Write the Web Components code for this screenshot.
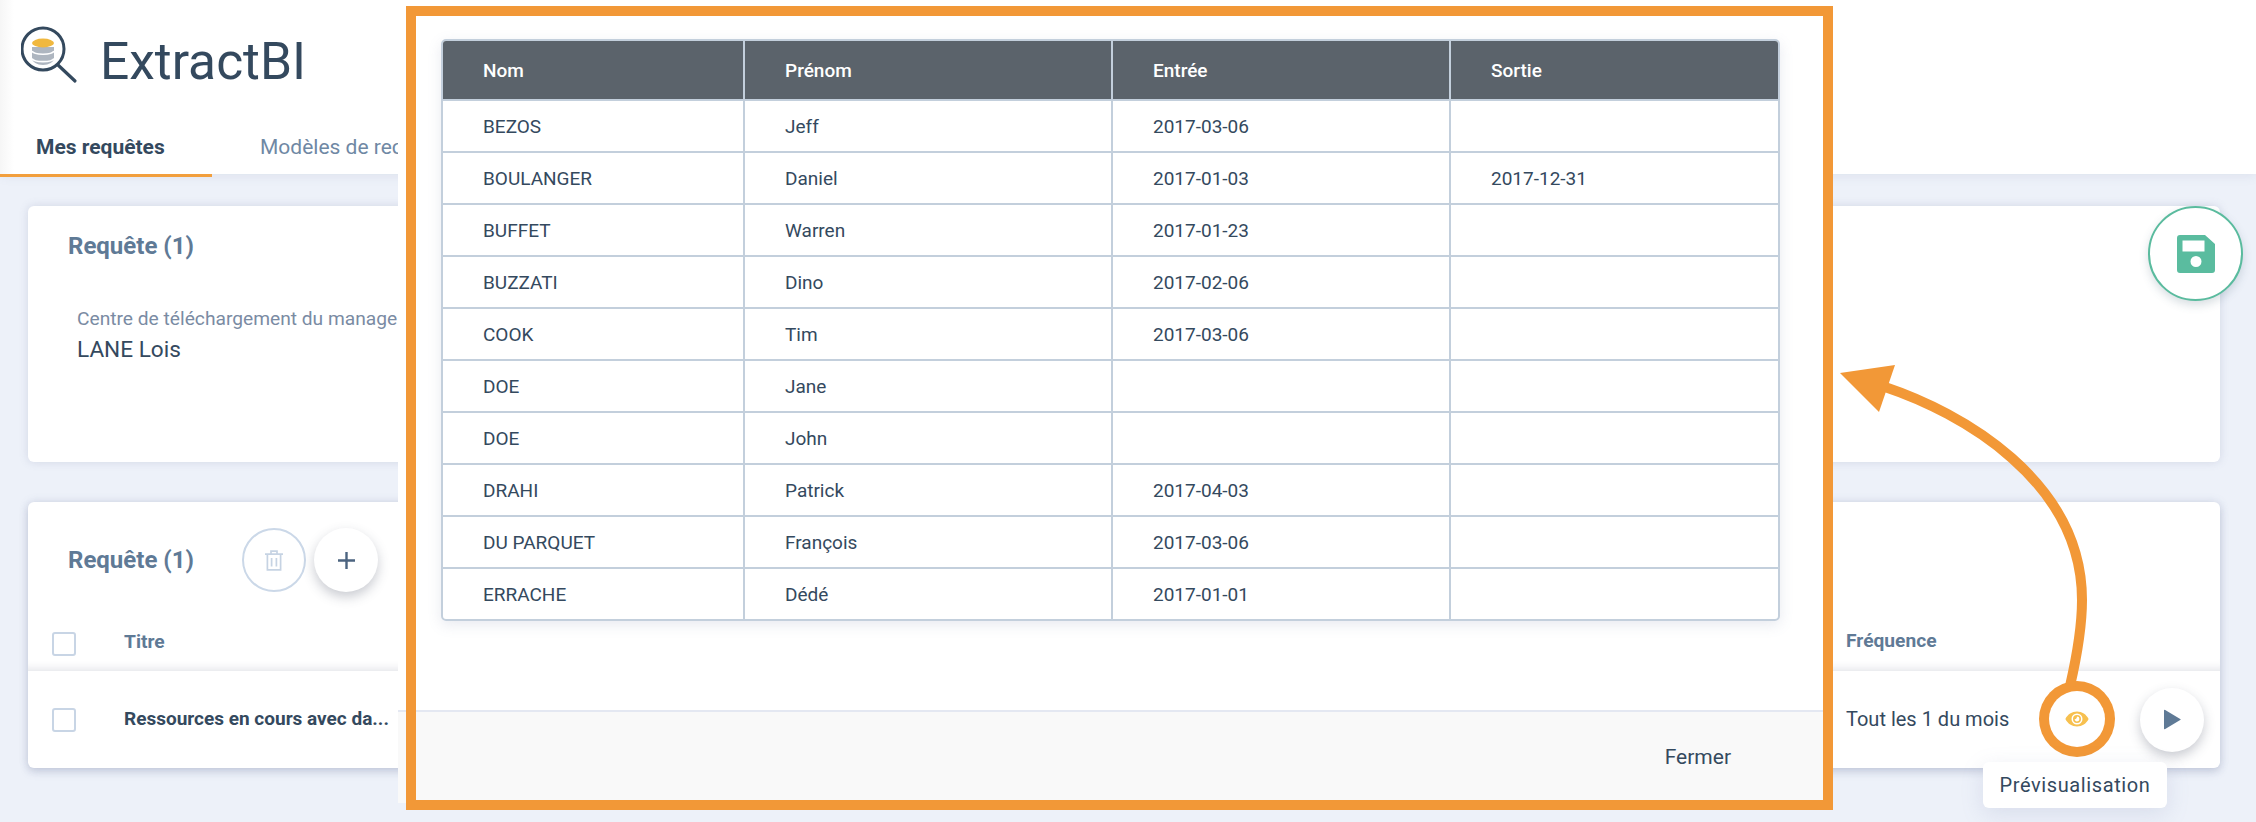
<!DOCTYPE html>
<html lang="fr">
<head>
<meta charset="utf-8">
<title>ExtractBI</title>
<style>
  html, body { margin: 0; height: 100%; }
  body { background: #edf1f9; font-family: Roboto, "Liberation Sans", sans-serif; color: #34495e; overflow: hidden; position: relative; }
</style>
</head>
<body>
<app-header></app-header>
<page-main>
  <request-card></request-card>
  <request-list></request-list>
</page-main>
<preview-modal>
  <data-table></data-table>
</preview-modal>
<call-out></call-out>

<script>
const ICONS = {
  logo: `<svg width="64" height="64" viewBox="0 0 64 64" fill="none">
    <ellipse cx="22" cy="32" rx="11" ry="7" fill="#aeb6c0"/>
    <rect x="11" y="21" width="22" height="11" fill="#aeb6c0"/>
    <path d="M11 22c2 4 20 4 22 0" stroke="#fff" stroke-width="1.6" transform="translate(0 3.2)"/>
    <path d="M11 22c2 4 20 4 22 0" stroke="#fff" stroke-width="1.6" transform="translate(0 10.6)"/>
    <ellipse cx="22" cy="17" rx="11" ry="4.4" fill="#f0b83f"/>
    <circle cx="22" cy="23" r="21" stroke="#34495e" stroke-width="3"/>
    <path d="M37 39l17 16" stroke="#34495e" stroke-width="3.2" stroke-linecap="round"/>
  </svg>`,
  trash: `<svg width="18" height="21" viewBox="0 0 18 21" fill="none" stroke="#c6d3e3" stroke-width="1.7">
    <path d="M0 4.2h18M6 4V1.2h6V4M2.400 4.400v15.400h13.200V4.400M6.600 8v8.600M11.400 8v8.600"/>
  </svg>`,
  plus: `<svg width="17" height="17" viewBox="0 0 17 17"><path d="M8.500 0v17M0 8.500h17" stroke="#4c6480" stroke-width="2.400"/></svg>`,
  play: `<svg width="18" height="21" viewBox="0 0 18 21"><path d="M1 1.500v18q0 1.200 1.200.6l15-9q1-.6 0-1.200l-15-9Q1 .3 1 1.500z" fill="#5f7a96"/></svg>`,
  eye: `<svg width="24" height="16" viewBox="0 0 24 16">
    <path fill="#f7c04f" fill-rule="evenodd" d="M12 .5C7 .5 2.600 3.400.4 8c2.200 4.600 6.600 7.500 11.600 7.500S21.400 12.600 23.600 8C21.400 3.400 17 .5 12 .5zm0 2a5.500 5.500 0 1 1 0 11 5.500 5.500 0 0 1 0-11z"/>
    <path fill="#f7c04f" fill-rule="evenodd" d="M12 4a4 4 0 1 0 0 8 4 4 0 0 0 0-8zm0 1.600a2.400 2.400 0 1 1 0 4.800c-1.200 0-2.300-1-2.400-2.200 1 .4 2.500-.9 2.400-2.600z"/>
  </svg>`,
  save: `<svg width="38" height="38" viewBox="0 0 38 38"><path fill="#5abc9f" fill-rule="evenodd" d="M3 0h25l10 9v26a3 3 0 0 1-3 3H3a3 3 0 0 1-3-3V3a3 3 0 0 1 3-3zm2.500 5.500v11h22v-11zM19 21a5.500 5.500 0 1 0 0 11 5.500 5.500 0 0 0 0-11z"/></svg>`
};

class AppHeader extends HTMLElement {
  connectedCallback() {
    this.attachShadow({ mode: 'open' });
    this.shadowRoot.innerHTML = `
      <style>
        :host { display: block; position: relative; background: linear-gradient(90deg, #f6f6f6, #fff 14px); height: 174px; box-shadow: 0 2px 10px rgba(110, 120, 160, .12); }
        .brand { display: flex; align-items: flex-start; height: 121px; padding-left: 21px; box-sizing: border-box; padding-top: 26px; }
        .logo { width: 64px; height: 64px; }
        h1 { margin: 0 0 0 15px; font-size: 51.500px; font-weight: 400; line-height: 38px; padding-top: 17px; color: #34495e; }
        nav { display: flex; height: 55px; font-size: 21px; }
        a { display: block; box-sizing: border-box; height: 56px; line-height: 52px; }
        .on { width: 212px; padding-left: 36px; font-weight: 700; color: #34495e; border-bottom: 3px solid #f29f3d; }
        .off { margin-left: 48px; color: #6f88a4; white-space: nowrap; }
      </style>
      <div class="brand"><div class="logo">${ICONS.logo}</div><h1>ExtractBI</h1></div>
      <nav><a class="on">Mes requêtes</a><a class="off">Modèles de requêtes</a></nav>`;
  }
}

class PageMain extends HTMLElement {
  connectedCallback() {
    this.attachShadow({ mode: 'open' });
    this.shadowRoot.innerHTML = `
      <style>
        :host { display: flex; flex-direction: column; gap: 40px; padding: 32px 36px 0 28px; }
      </style>
      <slot></slot>`;
  }
}

class RoundButton extends HTMLElement {
  connectedCallback() {
    this.attachShadow({ mode: 'open' });
    const kind = this.getAttribute('icon');
    this.shadowRoot.innerHTML = `
      <style>
        :host { display: flex; align-items: center; justify-content: center; box-sizing: border-box; width: 64px; height: 64px; border-radius: 50%; background: #fff; flex: none; box-shadow: 0 5px 12px rgba(60, 70, 90, .28); }
        :host([flat]) { box-shadow: none; border: 2px solid #cbd8e8; }
      </style>
      ${ICONS[kind]}`;
  }
}

class RequestCard extends HTMLElement {
  connectedCallback() {
    this.attachShadow({ mode: 'open' });
    this.shadowRoot.innerHTML = `
      <style>
        :host { display: block; position: relative; height: 256px; box-sizing: border-box; padding: 26px 40px; background: #fff; border-radius: 6px; box-shadow: 0 0 10px rgba(100, 110, 150, .2); }
        h2 { margin: 0; font-size: 24px; line-height: 28px; font-weight: 700; color: #5f7a96; }
        .field { margin: 48px 0 0 9px; }
        label { display: block; font-size: 19.200px; line-height: 22px; color: #7a8ba3; white-space: nowrap; }
        .val { font-size: 22.600px; line-height: 26px; margin-top: 7px; color: #34495e; }
        .save { position: absolute; right: -23px; top: 0; box-sizing: border-box; width: 95px; height: 95px; border-radius: 50%; border: 2px solid #5abb9e; background: #fff; display: flex; align-items: center; justify-content: center; box-shadow: 0 4px 10px rgba(60, 90, 110, .2); }
      </style>
      <h2>Requête (1)</h2>
      <div class="field"><label>Centre de téléchargement du manager</label><div class="val">LANE Lois</div></div>
      <div class="save">${ICONS.save}</div>`;
  }
}

class RequestList extends HTMLElement {
  connectedCallback() {
    this.attachShadow({ mode: 'open' });
    this.shadowRoot.innerHTML = `
      <style>
        :host { display: block; position: relative; height: 266px; background: #fff; border-radius: 6px; box-shadow: 0 0 10px rgba(100, 110, 150, .18), 0 4px 8px rgba(110, 120, 160, .24); }
        .top { display: flex; align-items: center; height: 90px; padding: 26px 0 0 40px; box-sizing: border-box; }
        h2 { margin: 0 46px 0 0; width: 128px; font-size: 24px; font-weight: 700; color: #5f7a96; white-space: nowrap; }
        .btns { display: flex; gap: 8px; }
        .head, .row { display: flex; justify-content: space-between; box-sizing: border-box; }
        .head { height: 79px; font-size: 19.200px; font-weight: 700; color: #5f7a96; box-shadow: inset 0 -10px 8px -8px rgba(70, 80, 110, .16); position: relative; }
        .row { height: 97px; align-items: center; font-size: 20px; color: #34495e; }
        .left { display: flex; align-items: center; padding-left: 24px; }
        .box { box-sizing: border-box; width: 24px; height: 24px; border: 2px solid #c8d5e5; border-radius: 3px; background: #fff; margin-right: 48px; }
        .head .left { height: 46px; padding-top: 40px; align-items: flex-start; }
        .head span { position: relative; top: 0; line-height: 20px; }
        .title { font-weight: 700; font-size: 19px; white-space: nowrap; position: relative; top: -1px; }
        .right { width: 374px; display: flex; align-items: center; }
        .head .right { padding-top: 39px; align-items: flex-start; }
        .freq { width: 199px; white-space: nowrap; position: relative; top: -1px; }
        .acts { display: flex; gap: 31px; align-items: center; }
        .eye { box-shadow: 0 0 0 10px #f29837; width: 56px; height: 56px; margin: 0 4px; position: relative; top: -1px; }
      </style>
      <div class="top">
        <h2>Requête (1)</h2>
        <div class="btns"><round-button icon="trash" flat></round-button><round-button icon="plus"></round-button></div>
      </div>
      <div class="head">
        <div class="left"><div class="box"></div><span>Titre</span></div>
        <div class="right"><span>Fréquence</span></div>
      </div>
      <div class="row">
        <div class="left"><div class="box"></div><span class="title">Ressources en cours avec da...</span></div>
        <div class="right">
          <span class="freq">Tout les 1 du mois</span>
          <div class="acts"><round-button class="eye" icon="eye"></round-button><round-button icon="play"></round-button></div>
        </div>
      </div>`;
  }
}

class PreviewModal extends HTMLElement {
  connectedCallback() {
    this.attachShadow({ mode: 'open' });
    this.shadowRoot.innerHTML = `
      <style>
        :host { position: absolute; left: 398px; top: 0; width: 1430px; height: 803px; display: flex; flex-direction: column; background: #fff; }
        .body { flex: 1; padding: 39px 0 0 43px; }
        footer { height: 93px; box-sizing: border-box; border-top: 2px solid #e4e8f2; background: #f9f9f9; display: flex; align-items: center; justify-content: flex-end; padding: 0 97px 2px 0; font-size: 21px; color: #34495e; }
        .frame { position: absolute; left: 8px; top: 6px; width: 1427px; height: 804px; box-sizing: border-box; border: 10px solid #f29837; pointer-events: none; }
      </style>
      <div class="body"><slot></slot></div>
      <footer>Fermer</footer>
      <div class="frame"></div>`;
  }
}

class DataTable extends HTMLElement {
  connectedCallback() {
    const rows = [
      ['BEZOS', 'Jeff', '2017-03-06', ''],
      ['BOULANGER', 'Daniel', '2017-01-03', '2017-12-31'],
      ['BUFFET', 'Warren', '2017-01-23', ''],
      ['BUZZATI', 'Dino', '2017-02-06', ''],
      ['COOK', 'Tim', '2017-03-06', ''],
      ['DOE', 'Jane', '', ''],
      ['DOE', 'John', '', ''],
      ['DRAHI', 'Patrick', '2017-04-03', ''],
      ['DU PARQUET', 'François', '2017-03-06', ''],
      ['ERRACHE', 'Dédé', '2017-01-01', '']
    ];
    this.attachShadow({ mode: 'open' });
    this.shadowRoot.innerHTML = `
      <style>
        :host { display: block; width: 1339px; box-sizing: border-box; border: 2px solid #c3cfdc; border-radius: 5px; overflow: hidden; box-shadow: 0 4px 14px rgba(110, 125, 160, .16); font-size: 19px; color: #34495e; }
        .t { display: grid; grid-template-columns: 302px 368px 338px 327px; grid-template-rows: 60px repeat(9, 52px) 50px; }
        .t > div { box-sizing: border-box; display: flex; align-items: center; padding-left: 40px; border-right: 2px solid #c3cfdc; border-bottom: 2px solid #c3cfdc; white-space: nowrap; }
        .t > div:nth-child(4n) { border-right: 0; }
        .t > div:nth-last-child(-n+4) { border-bottom: 0; }
        .t > .h { background: #5b636b; color: #fff; font-weight: 500; }
      </style>
      <div class="t">
        ${['Nom', 'Prénom', 'Entrée', 'Sortie'].map(h => `<div class="h">${h}</div>`).join('')}
        ${rows.map(r => r.map(c => `<div>${c}</div>`).join('')).join('')}
      </div>`;
  }
}

class CallOut extends HTMLElement {
  connectedCallback() {
    this.attachShadow({ mode: 'open' });
    this.shadowRoot.innerHTML = `
      <style>
        :host { position: absolute; inset: 0; pointer-events: none; font-size: 20px; color: #34495e; }
        svg { position: absolute; left: 0; top: 0; }
        .tip { position: absolute; left: 1983px; top: 762px; width: 184px; height: 46px; box-sizing: border-box; display: flex; align-items: center; justify-content: center; background: #fff; border-radius: 6px; box-shadow: 0 6px 22px rgba(120, 135, 180, .18); letter-spacing: .6px; }
      </style>
      <svg width="2256" height="822" fill="none">
        <path d="M1885 387C1960 412 2082 480 2082 600C2082 630 2076 660 2070 686" stroke="#f29837" stroke-width="10"/>
        <path d="M1840 373L1895 365L1879 412Z" fill="#f29837"/>
      </svg>
      <div class="tip">Prévisualisation</div>`;
  }
}

customElements.define('app-header', AppHeader);
customElements.define('page-main', PageMain);
customElements.define('round-button', RoundButton);
customElements.define('request-card', RequestCard);
customElements.define('request-list', RequestList);
customElements.define('preview-modal', PreviewModal);
customElements.define('data-table', DataTable);
customElements.define('call-out', CallOut);
</script>
</body>
</html>
